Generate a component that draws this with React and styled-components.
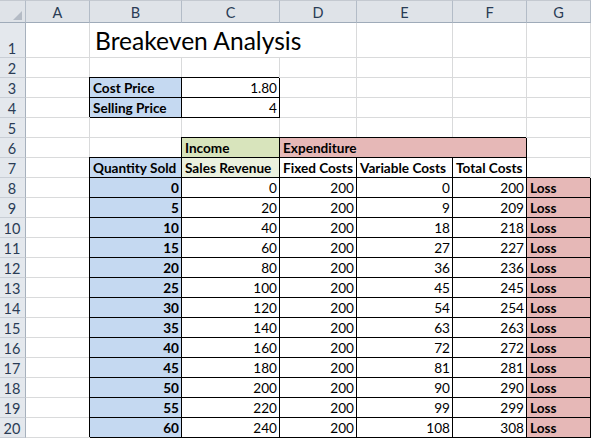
import React from "react";
import styled, { createGlobalStyle, css } from "styled-components";

const GlobalStyle = createGlobalStyle`
  html, body { margin: 0; padding: 0; background: #ffffff; overflow: hidden; }
  * { box-sizing: border-box; }
`;

const FILLS = {
  none: "#ffffff",
  blue: "#c5d9f1",
  green: "#d8e4bc",
  paleGreen: "#ebf1de",
  pink: "#e6b8b7",
};

const Sheet = styled.div`
  display: grid;
  grid-template-columns: 26px 64px 92px 98px 77px 96px 74px 64px;
  grid-template-rows: 23px 35px repeat(19, 20px);
  width: 591px;
  height: 438px;
  font-family: Lato, "Liberation Sans", sans-serif;
  font-size: 13.6px;
  color: #000;
`;

const Corner = styled.div`
  background: #dfe3e8;
  border-top: 1px solid #c4c9d0;
  border-right: 1px solid #b3bcc7;
  border-bottom: 1px solid #9fabb9;
  display: flex;
  align-items: flex-end;
  justify-content: flex-end;
  padding: 0 3px 2px 0;
`;

const ColHead = styled.div`
  background: #dfe3e8;
  border-top: 1px solid #c4c9d0;
  border-right: 1px solid #b3bcc7;
  border-bottom: 1px solid #9fabb9;
  color: #2a3c55;
  display: flex;
  align-items: center;
  justify-content: center;
  font-size: 14.5px;
  padding-top: 1px;
`;

const RowHead = styled.div`
  background: #e4e8ed;
  border-right: 1px solid #a7b1bd;
  border-bottom: 1px solid #c9ced5;
  color: #2a3c55;
  display: flex;
  align-items: flex-end;
  justify-content: center;
  font-size: 14.5px;
  line-height: 17px;
  padding-right: 1px;
`;

const Cell = styled.div`
  grid-column: span ${(p) => p.$span || 1};
  background: ${(p) => FILLS[p.$fill || "none"]};
  border-right: 1px solid #d9dadb;
  border-bottom: 1px solid #d9dadb;
  display: flex;
  align-items: flex-end;
  justify-content: ${(p) => (p.$align === "right" ? "flex-end" : "flex-start")};
  padding: 0 ${(p) => (p.$align === "right" ? "2px" : "0")} 0 ${(p) => (p.$align === "right" ? "0" : "3px")};
  font-weight: ${(p) => (p.$bold ? 700 : 400)};
  line-height: 17px;
  white-space: nowrap;
  overflow: visible;
  ${(p) =>
    p.$boxed &&
    css`
      border-right-color: #000;
      border-bottom-color: #000;
      box-shadow: -1px -1px 0 0 #000;
    `}
`;

const Title = styled(Cell)`
  font-size: 24.6px;
  line-height: 30px;
  padding-left: 5px;
  padding-bottom: 1px;
`;

const CornerMark = () => (
  <svg width="9" height="9" viewBox="0 0 9 9">
    <polygon points="9,0 9,9 0,9" fill="#b4bbc5" />
  </svg>
);

const COLS = ["A", "B", "C", "D", "E", "F", "G"];

const rows = [];
for (let q = 0; q <= 60; q += 5) {
  const variable = Math.round(q * 1.8);
  rows.push({
    q,
    revenue: q * 4,
    fixed: 200,
    variable,
    total: 200 + variable,
  });
}

export default function App() {
  return (
    <>
      <GlobalStyle />
      <Sheet>
        <Corner>
          <CornerMark />
        </Corner>
        {COLS.map((c) => (
          <ColHead key={c}>{c}</ColHead>
        ))}

        <RowHead>1</RowHead>
        <Cell />
        <Title $span={3}>Breakeven Analysis</Title>
        <Cell />
        <Cell />
        <Cell />

        <RowHead>2</RowHead>
        {COLS.map((c) => (
          <Cell key={c} />
        ))}

        <RowHead>3</RowHead>
        <Cell />
        <Cell $boxed $fill="blue" $bold>Cost Price</Cell>
        <Cell $boxed $align="right">1.80</Cell>
        <Cell />
        <Cell />
        <Cell />
        <Cell />

        <RowHead>4</RowHead>
        <Cell />
        <Cell $boxed $fill="blue" $bold>Selling Price</Cell>
        <Cell $boxed $align="right">4</Cell>
        <Cell />
        <Cell />
        <Cell />
        <Cell />

        <RowHead>5</RowHead>
        {COLS.map((c) => (
          <Cell key={c} />
        ))}

        <RowHead>6</RowHead>
        <Cell />
        <Cell />
        <Cell $boxed $fill="green" $bold>Income</Cell>
        <Cell $boxed $fill="pink" $bold $span={3}>Expenditure</Cell>
        <Cell />

        <RowHead>7</RowHead>
        <Cell />
        <Cell $boxed $fill="blue" $bold>Quantity Sold</Cell>
        <Cell $boxed $fill="paleGreen" $bold>Sales Revenue</Cell>
        <Cell $boxed $bold>Fixed Costs</Cell>
        <Cell $boxed $bold>Variable Costs</Cell>
        <Cell $boxed $bold>Total Costs</Cell>
        <Cell />

        {rows.map((r, i) => (
          <React.Fragment key={r.q}>
            <RowHead>{i + 8}</RowHead>
            <Cell />
            <Cell $boxed $fill="blue" $bold $align="right">{r.q}</Cell>
            <Cell $boxed $align="right">{r.revenue}</Cell>
            <Cell $boxed $align="right">{r.fixed}</Cell>
            <Cell $boxed $align="right">{r.variable}</Cell>
            <Cell $boxed $align="right">{r.total}</Cell>
            <Cell $boxed $fill="pink" $bold>Loss</Cell>
          </React.Fragment>
        ))}
      </Sheet>
    </>
  );
}
